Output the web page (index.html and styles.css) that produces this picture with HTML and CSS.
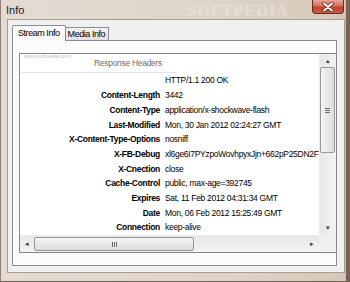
FILE: index.html
```html
<!DOCTYPE html>
<html lang="en">
<head>
  <meta charset="UTF-8" />
  <title>Info</title>
  <link rel="stylesheet" href="styles.css">
</head>
<body>

  <div class="window">
    <!-- Title bar -->
    <div class="titlebar">
      <span class="title">Info</span>
      <span class="watermark">SOFTPEDIA</span>
      <div class="close-btn">
        <svg width="12" height="10" viewBox="0 0 12 10">
          <path d="M2 1.5 L10 8.5 M10 1.5 L2 8.5" stroke="#5a1e14" stroke-width="3.6" stroke-linecap="round" />
          <path d="M2 1.5 L10 8.5 M10 1.5 L2 8.5" stroke="#ffffff" stroke-width="2" stroke-linecap="round" />
        </svg>
      </div>
    </div>

    <div class="client">
      <!-- Tabs -->
      <div class="tabs">
        <div class="tab active">Stream Info</div>
        <div class="tab">Media Info</div>
      </div>

      <div class="tab-pane">
        <div class="listview">
          <div class="lv-main">
            <div class="lv-content">
              <span class="site-mark">www.softpedia.com</span>
              <div class="group-header"><span>Response Headers</span></div>
              <div class="row"><span class="key"></span><span class="val">HTTP/1.1 200 OK</span></div>
              <div class="row"><span class="key">Content-Length</span><span class="val">3442</span></div>
              <div class="row"><span class="key">Content-Type</span><span class="val">application/x-shockwave-flash</span></div>
              <div class="row"><span class="key">Last-Modified</span><span class="val">Mon, 30 Jan 2012 02:24:27 GMT</span></div>
              <div class="row"><span class="key">X-Content-Type-Options</span><span class="val">nosniff</span></div>
              <div class="row"><span class="key">X-FB-Debug</span><span class="val">xl6ge6I7PYzpoWovhpyxJjn+662pP25DN2F</span></div>
              <div class="row"><span class="key">X-Cnection</span><span class="val">close</span></div>
              <div class="row"><span class="key">Cache-Control</span><span class="val">public, max-age=392745</span></div>
              <div class="row"><span class="key">Expires</span><span class="val">Sat, 11 Feb 2012 04:31:34 GMT</span></div>
              <div class="row"><span class="key">Date</span><span class="val">Mon, 06 Feb 2012 15:25:49 GMT</span></div>
              <div class="row"><span class="key">Connection</span><span class="val">keep-alive</span></div>
            </div>

            <!-- Vertical scrollbar -->
            <div class="vscroll">
              <div class="arrow">&#9652;</div>
              <div class="track">
                <div class="thumb v-thumb"><span class="grip-h"></span></div>
              </div>
              <div class="arrow">&#9662;</div>
            </div>
          </div>

          <!-- Horizontal scrollbar -->
          <div class="hscroll-row">
            <div class="hscroll">
              <div class="arrow">&#9666;</div>
              <div class="track">
                <div class="thumb h-thumb"><span class="grip-v"></span></div>
              </div>
              <div class="arrow">&#9656;</div>
            </div>
            <div class="corner"></div>
          </div>
        </div>
      </div>
    </div>
  </div>

</body>
</html>
```

FILE: styles.css
```css
* {
  box-sizing: border-box;
}

body {
  margin: 0;
  background: #5c4a3d;
  font-family: "Liberation Sans", Arial, sans-serif;
}

.window {
  position: relative;
  width: 350px;
  height: 282px;
  display: flex;
  flex-direction: column;
  padding: 0 5px 8px 6px;
  background: linear-gradient(to right, #e4dcd3 0%, #ded4c9 60%, #d5c8ba 100%);
  border-left: 1px solid #8e8276;
  border-bottom: 1px solid #6e6257;
  box-shadow: inset -4px 0 0 #7a6353, inset -5px 0 0 #c8b9aa;
}

/* Title bar */
.titlebar {
  height: 20px;
  display: flex;
  align-items: flex-start;
  justify-content: space-between;
}

.title {
  font-size: 11px;
  color: #1a1a1a;
  margin-top: 4px;
  margin-left: -1px;
}

.watermark {
  position: absolute;
  left: 186px;
  top: 1px;
  font-family: "Liberation Serif", serif;
  font-size: 17px;
  font-weight: bold;
  letter-spacing: 0.5px;
  color: rgba(255, 255, 255, 0.3);
  line-height: 20px;
}

.close-btn {
  position: relative;
  z-index: 1;
  width: 32px;
  height: 14px;
  margin-right: 1px;
  display: flex;
  align-items: center;
  justify-content: center;
  background: linear-gradient(to bottom, #e9a494 0%, #d36f5c 45%, #c2412d 55%, #cf5a3f 100%);
  border: 1px solid #6b2a20;
  border-top: none;
  border-radius: 0 0 4px 4px;
}

/* Client area */
.client {
  flex: 1;
  display: flex;
  flex-direction: column;
  background: #f0f0f0;
  border: 1px solid #a89d92;
  padding: 5px 7px 6px 4px;
}

.tabs {
  display: flex;
  align-items: flex-end;
  height: 15px;
  font-size: 9px;
  letter-spacing: -0.45px;
  color: #000;
}

.tab {
  height: 13px;
  padding: 0 3px 0 2px;
  line-height: 12px;
  background: linear-gradient(to bottom, #f3f3f3, #e1e1e1);
  border: 1px solid #898c95;
  border-bottom: none;
  border-left: none;
}

.tab.active {
  height: 16px;
  margin-bottom: -1px;
  padding: 0 5px 0 5px;
  line-height: 14px;
  background: #fbfbfb;
  border-left: 1px solid #898c95;
  border-radius: 2px 2px 0 0;
  position: relative;
  z-index: 1;
}

.tab-pane {
  flex: 1;
  display: flex;
  background: #fbfbfb;
  border: 1px solid #898c95;
  padding: 12px 12px 12px 6px;
}

/* List view */
.listview {
  flex: 1;
  display: flex;
  flex-direction: column;
  background: #fff;
  border: 1px solid #828790;
}

.lv-main {
  flex: 1;
  display: flex;
  min-height: 0;
}

.lv-content {
  position: relative;
  flex: 1;
  overflow: hidden;
  font-size: 8.5px;
  letter-spacing: -0.3px;
  color: #000;
}

.site-mark {
  position: absolute;
  left: 4px;
  top: -1px;
  font-size: 6px;
  color: #c9c9c9;
}

.group-header {
  height: 19px;
  width: 156px;
  margin-left: 1px;
  border-bottom: 1px solid #dde3ea;
  display: flex;
  align-items: center;
  justify-content: flex-end;
  padding-right: 15px;
  color: #707070;
  font-size: 8.5px;
}

.row {
  display: flex;
  height: 14.7px;
  line-height: 14.7px;
  white-space: nowrap;
}

.key {
  width: 140px;
  flex: none;
  text-align: right;
  font-weight: bold;
}

.val {
  margin-left: 5px;
}

/* Scrollbars */
.vscroll {
  width: 17px;
  display: flex;
  flex-direction: column;
  background: linear-gradient(to right, #e6e6e6, #f4f4f4);
  border-left: 1px solid #ececec;
}

.arrow {
  height: 14px;
  flex: none;
  display: flex;
  align-items: center;
  justify-content: center;
  font-size: 7px;
  color: #3c3c3c;
}

.track {
  flex: 1;
  display: flex;
}

.vscroll .track {
  flex-direction: column;
}

.thumb {
  display: flex;
  align-items: center;
  justify-content: center;
  border: 1px solid #979797;
  border-radius: 2px;
}

.v-thumb {
  height: 86px;
  margin: -1px 1px 0 0;
  background: linear-gradient(to right, #f5f5f5, #dcdcdc);
}

.grip-h {
  width: 5px;
  height: 5px;
  background: repeating-linear-gradient(to bottom, #6b6b6b 0, #6b6b6b 1px, transparent 1px, transparent 2px);
}

.hscroll-row {
  height: 17px;
  display: flex;
}

.hscroll {
  flex: 1;
  display: flex;
  background: linear-gradient(to bottom, #e6e6e6, #f4f4f4);
  border-top: 1px solid #ececec;
}

.hscroll .arrow {
  width: 14px;
  height: auto;
}

.h-thumb {
  width: 160px;
  margin: 1px 0 1px 0;
  background: linear-gradient(to bottom, #f5f5f5, #dcdcdc);
}

.grip-v {
  width: 5px;
  height: 5px;
  background: repeating-linear-gradient(to right, #6b6b6b 0, #6b6b6b 1px, transparent 1px, transparent 2px);
}

.corner {
  width: 17px;
  background: #f0f0f0;
}
```
